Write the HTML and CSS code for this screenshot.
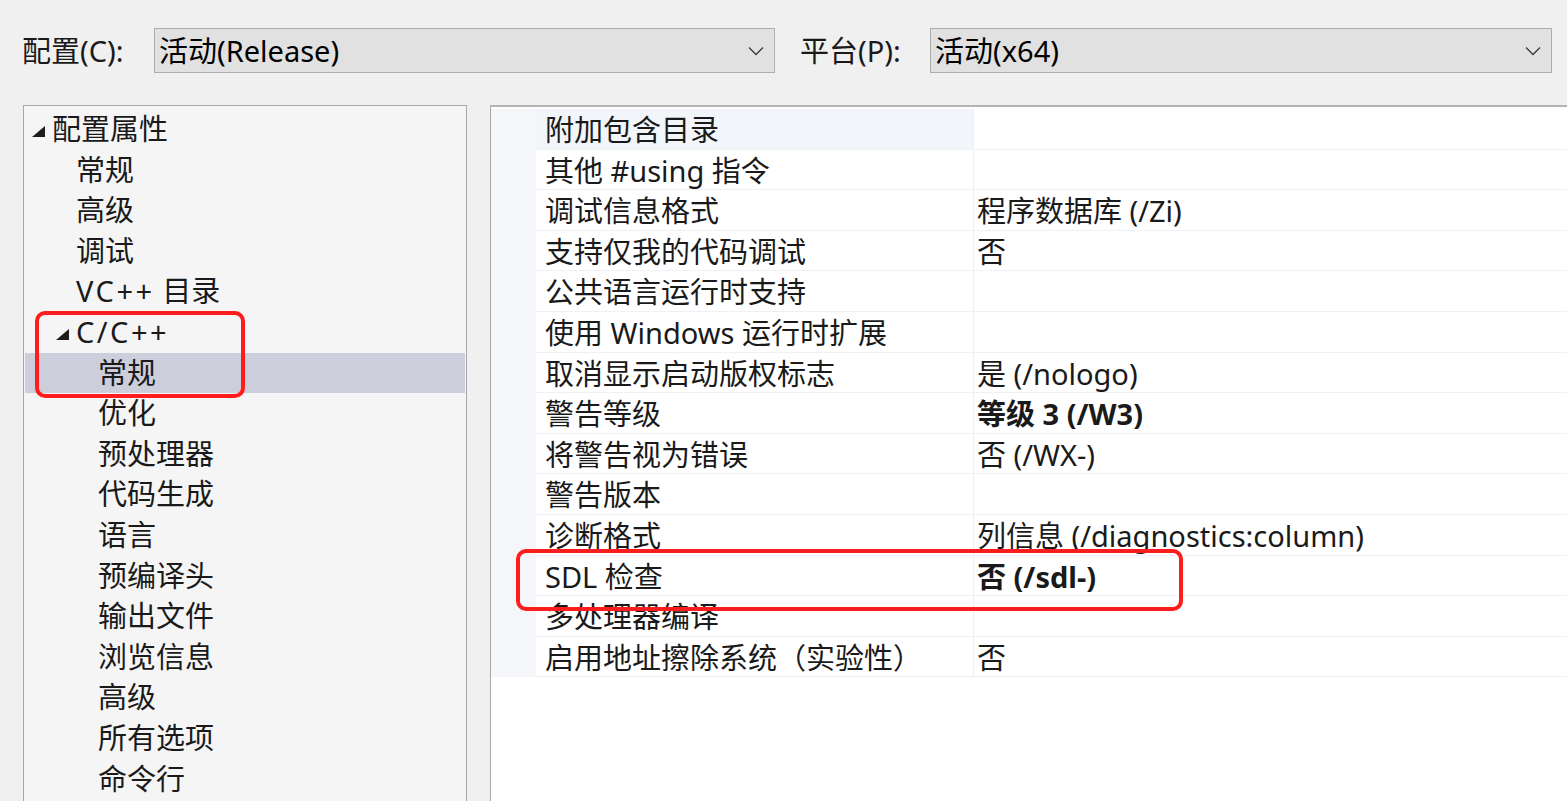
FILE: index.html
```html
<!DOCTYPE html>
<html lang="zh-CN">
<head>
<meta charset="utf-8">
<title>属性页</title>
<link rel="stylesheet" href="styles.css">
</head>
<body>
<div class="toolbar">
  <label class="tb-label">配置(C):</label>
  <div class="combo combo-config">
    <span class="combo-text">活动(Release)</span>
    <svg class="chev" width="16" height="10" viewBox="0 0 16 10"><polyline points="1,1.5 8,8.5 15,1.5" fill="none" stroke="#3c3c3c" stroke-width="1.3"/></svg>
  </div>
  <label class="tb-label tb-label2">平台(P):</label>
  <div class="combo combo-platform">
    <span class="combo-text">活动(x64)</span>
    <svg class="chev" width="16" height="10" viewBox="0 0 16 10"><polyline points="1,1.5 8,8.5 15,1.5" fill="none" stroke="#3c3c3c" stroke-width="1.3"/></svg>
  </div>
</div>

<div class="main">
  <div class="tree">
    <div class="row lv0"><span class="arrow"><svg width="13" height="11" viewBox="0 0 13 11"><polygon points="13,0 13,11 0,11" fill="#1e1e1e"/></svg></span><span>配置属性</span></div>
    <div class="row lv1"><span class="arrow"></span><span>常规</span></div>
    <div class="row lv1"><span class="arrow"></span><span>高级</span></div>
    <div class="row lv1"><span class="arrow"></span><span>调试</span></div>
    <div class="row lv1"><span class="arrow"></span><span><span class="wide">VC++</span> 目录</span></div>
    <div class="row lv1"><span class="arrow"><svg width="13" height="11" viewBox="0 0 13 11"><polygon points="13,0 13,11 0,11" fill="#1e1e1e"/></svg></span><span class="wide">C/C++</span></div>
    <div class="row lv2 selected"><span class="arrow"></span><span>常规</span></div>
    <div class="row lv2"><span class="arrow"></span><span>优化</span></div>
    <div class="row lv2"><span class="arrow"></span><span>预处理器</span></div>
    <div class="row lv2"><span class="arrow"></span><span>代码生成</span></div>
    <div class="row lv2"><span class="arrow"></span><span>语言</span></div>
    <div class="row lv2"><span class="arrow"></span><span>预编译头</span></div>
    <div class="row lv2"><span class="arrow"></span><span>输出文件</span></div>
    <div class="row lv2"><span class="arrow"></span><span>浏览信息</span></div>
    <div class="row lv2"><span class="arrow"></span><span>高级</span></div>
    <div class="row lv2"><span class="arrow"></span><span>所有选项</span></div>
    <div class="row lv2"><span class="arrow"></span><span>命令行</span></div>
    <div class="mark mark-tree"></div>
  </div>

  <div class="grid">
    <div class="prop first"><div class="gutter"></div><div class="name">附加包含目录</div><div class="value"></div></div>
    <div class="prop"><div class="gutter"></div><div class="name">其他 #using 指令</div><div class="value"></div></div>
    <div class="prop"><div class="gutter"></div><div class="name">调试信息格式</div><div class="value">程序数据库 (/Zi)</div></div>
    <div class="prop"><div class="gutter"></div><div class="name">支持仅我的代码调试</div><div class="value">否</div></div>
    <div class="prop"><div class="gutter"></div><div class="name">公共语言运行时支持</div><div class="value"></div></div>
    <div class="prop"><div class="gutter"></div><div class="name">使用 Windows 运行时扩展</div><div class="value"></div></div>
    <div class="prop"><div class="gutter"></div><div class="name">取消显示启动版权标志</div><div class="value">是 (/nologo)</div></div>
    <div class="prop"><div class="gutter"></div><div class="name">警告等级</div><div class="value bold">等级 3 (/W3)</div></div>
    <div class="prop"><div class="gutter"></div><div class="name">将警告视为错误</div><div class="value">否 (/WX-)</div></div>
    <div class="prop"><div class="gutter"></div><div class="name">警告版本</div><div class="value"></div></div>
    <div class="prop"><div class="gutter"></div><div class="name">诊断格式</div><div class="value">列信息 (/diagnostics:column)</div></div>
    <div class="prop"><div class="gutter"></div><div class="name">SDL 检查</div><div class="value bold">否 (/sdl-)</div></div>
    <div class="prop"><div class="gutter"></div><div class="name">多处理器编译</div><div class="value"></div></div>
    <div class="prop"><div class="gutter"></div><div class="name">启用地址擦除系统（实验性）</div><div class="value">否</div></div>
    <div class="mark mark-grid"></div>
  </div>
</div>
</body>
</html>
```

FILE: styles.css
```css
html, body {
  margin: 0;
  padding: 0;
  background: #f0f0f0;
  overflow: hidden;
  height: 100%;
}

body {
  font-family: "Noto Sans", "Noto Sans CJK SC", sans-serif;
  font-size: 29px;
  color: #1a1a1a;
}

.toolbar {
  display: flex;
  align-items: center;
  height: 45px;
  padding: 28px 0 0 22px;
}

.tb-label {
  width: 132px;
  flex: none;
  line-height: 45px;
}

.tb-label2 {
  margin-left: 25px;
  width: 130px;
}

.combo {
  box-sizing: border-box;
  height: 45px;
  display: flex;
  align-items: center;
  justify-content: space-between;
  background: #e1e1e1;
  border: 1px solid #adadad;
  padding: 0 10px 0 4px;
  flex: none;
}

.combo-config { width: 621px; }
.combo-platform { width: 622px; }

.combo-text {
  line-height: 43px;
  color: #000;
}

.chev { flex: none; }

.main {
  display: flex;
  margin-top: 32px;
  padding-left: 23px;
  height: 720px;
}

.tree {
  position: relative;
  box-sizing: border-box;
  width: 444px;
  flex: none;
  background: #f5f5f5;
  border: 1px solid #a8a8a8;
  padding: 3px 1px 0 1px;
}

.row {
  display: flex;
  align-items: center;
  height: 40.6px;
  line-height: 40.6px;
  white-space: nowrap;
}

.row .arrow {
  width: 20px;
  flex: none;
  display: flex;
  align-items: center;
  padding-top: 4px;
}

.wide {
  letter-spacing: 2.5px;
}

.lv0 { padding-left: 7px; }
.lv1 { padding-left: 31px; }
.lv2 { padding-left: 53px; }

.row.selected {
  background: #cccedb;
}

.mark {
  position: absolute;
  box-sizing: border-box;
  border: 4px solid #ff1c1c;
  border-radius: 10px;
  pointer-events: none;
}

.mark-tree {
  left: 11px;
  top: 205px;
  width: 210px;
  height: 87px;
}

.grid {
  position: relative;
  flex: 1;
  margin-left: 23px;
  margin-right: -20px;
  background: #ffffff;
  border-top: 2px solid #b4b4b4;
  border-left: 1px solid #a8a8a8;
  padding-top: 2px;
}

.prop {
  display: flex;
  height: 40.6px;
  white-space: nowrap;
}

.gutter {
  width: 45px;
  flex: none;
  background: #f5f6f9;
}

.name {
  box-sizing: border-box;
  width: 437px;
  flex: none;
  padding: 2px 0 0 9px;
  line-height: 37.6px;
  border-bottom: 1px solid #f0f1f6;
}

.value {
  box-sizing: border-box;
  flex: 1;
  padding: 2px 0 0 3px;
  line-height: 37.6px;
  border-left: 1px solid #eeeff6;
  border-bottom: 1px solid #f0f1f6;
}

.prop.first .name {
  background: #f2f6fb;
}

.bold {
  font-weight: 700;
}

.mark-grid {
  left: 25px;
  top: 442px;
  width: 667px;
  height: 62px;
}
```
